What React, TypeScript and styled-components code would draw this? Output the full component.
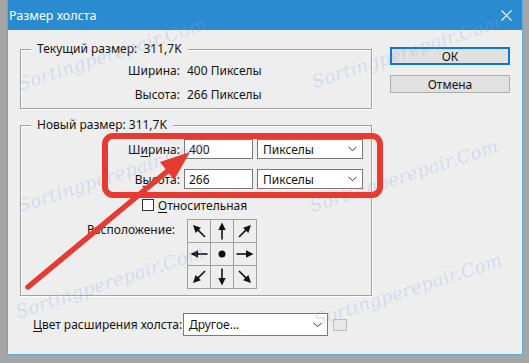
import React from 'react';
import styled, { createGlobalStyle } from 'styled-components';

const GlobalStyle = createGlobalStyle`
  html, body {
    margin: 0;
    padding: 0;
  }
  body {
    width: 529px;
    height: 363px;
    overflow: hidden;
    background: #a5a5a5;
    font-family: "Noto Sans", "Open Sans", sans-serif;
    font-size: 12px;
    color: #141414;
  }
`;

const Screen = styled.div`
  position: relative;
  width: 529px;
  height: 363px;
  box-sizing: border-box;
  padding-left: 7px;
  background: #a5a5a5;
`;

const Window = styled.div`
  width: 516px;
  height: 355px;
  box-sizing: border-box;
  border: 1px solid #5eaae0;
  border-top: none;
  background: #eeeeee;
  display: flex;
  flex-direction: column;
`;

const TitleBar = styled.div`
  height: 30px;
  flex: none;
  display: flex;
  align-items: center;
  justify-content: space-between;
  padding: 0 10px 0 1px;
  background: #2b8bd0;
  color: #fff;
  font-size: 12.5px;
`;

const Body = styled.div`
  display: flex;
  gap: 18px;
  padding: 10px 0 0 12px;
`;

const LeftCol = styled.div`
  width: 352px;
  display: flex;
  flex-direction: column;
`;

const RightCol = styled.div`
  width: 120px;
  display: flex;
  flex-direction: column;
  gap: 10px;
  padding-top: 7px;
`;

const Button = styled.div<{ $default?: boolean }>`
  height: 18px;
  box-sizing: border-box;
  display: flex;
  align-items: center;
  justify-content: center;
  background: #e1e1e1;
  border: ${({ $default }) => ($default ? '2px solid #0a78d7' : '1px solid #adadad')};
`;

const Group = styled.fieldset<{ $gap?: number }>`
  margin: ${({ $gap }) => $gap || 0}px 0 0 0;
  padding: 0;
  min-width: 0;
  border: 1px solid #a0a0a0;
  box-shadow: 1px 1px 0 #fff, inset 1px 1px 0 #fff;
`;

const Legend = styled.legend`
  margin-left: 10px;
  padding: 0 6px;
  line-height: 18px;
  background: #eeeeee;
`;

const InfoGrid = styled.div`
  display: grid;
  grid-template-columns: 159px auto;
  column-gap: 7px;
  grid-auto-rows: 24px;
  align-items: center;
  padding-bottom: 2px;
`;

const Label = styled.span`
  justify-self: end;
  white-space: nowrap;
`;

const SizeGrid = styled.div`
  display: grid;
  grid-template-columns: 159px 69px 106px;
  column-gap: 4px;
  row-gap: 10px;
  grid-auto-rows: 20px;
  align-items: center;
  padding-top: 5px;
`;

const TextField = styled.div`
  height: 20px;
  box-sizing: border-box;
  border: 1px solid #7a7a7a;
  background: #fff;
  display: flex;
  align-items: center;
  padding-left: 4px;
`;

const Select = styled.div<{ $w?: number; $h?: number }>`
  width: ${({ $w }) => ($w ? `${$w}px` : 'auto')};
  height: ${({ $h }) => $h || 20}px;
  box-sizing: border-box;
  border: 1px solid #7a7a7a;
  background: #fff;
  display: flex;
  align-items: center;
  justify-content: space-between;
  padding: 0 5px 0 5px;
`;

const CheckRow = styled.div`
  margin-top: 7px;
  height: 18px;
  display: flex;
  align-items: center;
  gap: 4px;
  padding-left: 121px;
`;

const Box = styled.span`
  width: 12px;
  height: 12px;
  box-sizing: border-box;
  border: 1px solid #333;
  background: #fff;
`;

const AnchorRow = styled.div`
  margin-top: 5px;
  display: flex;
  gap: 12px;
  padding-bottom: 6px;
`;

const AnchorLabel = styled.span`
  width: 154px;
  text-align: right;
  line-height: 16px;
  padding-top: 3px;
`;

const AnchorGrid = styled.div`
  display: grid;
  grid-template-columns: repeat(3, 22px);
  grid-auto-rows: 22px;
  gap: 1px;
  border: 1px solid #a0a0a0;
  background: #a0a0a0;
`;

const Cell = styled.div`
  background: #eeeeee;
  display: flex;
  align-items: center;
  justify-content: center;
`;

const BottomRow = styled.div`
  margin-top: 17px;
  display: flex;
  align-items: center;
  gap: 3px;
  padding-left: 13px;
  height: 23px;
`;

const BottomLabel = styled.span`
  width: 147px;
  white-space: nowrap;
`;

const Swatch = styled.span`
  margin-left: 2px;
  width: 14px;
  height: 12px;
  box-sizing: border-box;
  border: 1px solid #bdbdbd;
  background: #e8e8ea;
`;

const Key = styled.u`
  text-decoration-thickness: 1px;
  text-underline-offset: 2px;
`;

const Overlay = styled.svg`
  position: absolute;
  left: 0;
  top: 0;
  pointer-events: none;
`;

const Watermark = styled.span<{ $x: number; $y: number }>`
  position: absolute;
  left: ${({ $x }) => $x}px;
  top: ${({ $y }) => $y - 24}px;
  line-height: 24px;
  font-family: "DejaVu Serif", serif;
  font-style: italic;
  font-size: 18px;
  letter-spacing: 0.3px;
  color: rgba(145, 162, 220, 0.28);
  transform-origin: 0 100%;
  transform: rotate(-18deg);
  white-space: nowrap;
  pointer-events: none;
`;

const Chevron = () => (
  <svg width="9" height="6" viewBox="0 0 9 6">
    <path d="M0.5 0.8 L4.5 4.8 L8.5 0.8" fill="none" stroke="#333" strokeWidth="1" />
  </svg>
);

const CloseIcon = () => (
  <svg width="11" height="11" viewBox="0 0 11 11">
    <path d="M0.5 0.5 L10.5 10.5 M10.5 0.5 L0.5 10.5" stroke="#fff" strokeWidth="1.1" />
  </svg>
);

const ArrowGlyph = ({ angle }: { angle: number }) => (
  <svg width="22" height="22" viewBox="0 0 22 22">
    <g transform={`rotate(${angle} 11 11)`}>
      <line x1="11" y1="19.5" x2="11" y2="8" stroke="#111" strokeWidth="1.6" />
      <polygon points="11,2.5 7.3,10 14.7,10" fill="#111" />
    </g>
  </svg>
);

const anchors: (number | null)[] = [-45, 0, 45, -90, null, 90, -135, 180, 135];

const marks: [number, number][] = [
  [22, 96],
  [316, 94],
  [22, 218],
  [314, 218],
  [20, 324],
  [318, 332],
];

export default function App() {
  return (
    <Screen>
      <GlobalStyle />
      <Window>
        <TitleBar>
          <span>Размер холста</span>
          <CloseIcon />
        </TitleBar>
        <Body>
          <LeftCol>
            <Group>
              <Legend>Текущий размер:&nbsp; 311,7K</Legend>
              <InfoGrid>
                <Label>Ширина:</Label>
                <span>400 Пикселы</span>
                <Label>Высота:</Label>
                <span>266 Пикселы</span>
              </InfoGrid>
            </Group>

            <Group $gap={7}>
              <Legend>Новый размер: 311,7K</Legend>
              <SizeGrid>
                <Label>
                  Ш<Key>и</Key>рина:
                </Label>
                <TextField>400</TextField>
                <Select>
                  Пикселы
                  <Chevron />
                </Select>
                <Label>
                  В<Key>ы</Key>сота:
                </Label>
                <TextField>266</TextField>
                <Select>
                  Пикселы
                  <Chevron />
                </Select>
              </SizeGrid>
              <CheckRow>
                <Box />
                <span>
                  <Key>О</Key>тносительная
                </span>
              </CheckRow>
              <AnchorRow>
                <AnchorLabel>Расположение:</AnchorLabel>
                <AnchorGrid>
                  {anchors.map((a, i) => (
                    <Cell key={i}>
                      {a === null ? (
                        <svg width="8" height="8" viewBox="0 0 8 8">
                          <circle cx="4" cy="4" r="3.5" fill="#111" />
                        </svg>
                      ) : (
                        <ArrowGlyph angle={a} />
                      )}
                    </Cell>
                  ))}
                </AnchorGrid>
              </AnchorRow>
            </Group>

            <BottomRow>
              <BottomLabel>
                <Key>Ц</Key>вет расширения холста:
              </BottomLabel>
              <Select $w={145} $h={23}>
                Другое...
                <Chevron />
              </Select>
              <Swatch />
            </BottomRow>
          </LeftCol>

          <RightCol>
            <Button $default>ОК</Button>
            <Button>Отмена</Button>
          </RightCol>
        </Body>
      </Window>

      {marks.map(([x, y], i) => (
        <Watermark key={i} $x={x} $y={y}>
          Sortingperepair.Com
        </Watermark>
      ))}

      <Overlay width="529" height="363" viewBox="0 0 529 363">
        <rect x="105" y="136" width="275" height="59" rx="8" fill="none" stroke="#e53b30" strokeWidth="6" />
        <line x1="28" y1="287" x2="170" y2="169" stroke="#e53b30" strokeWidth="5.5" strokeLinecap="round" />
        <polygon points="190,152 174,180 160,162" fill="#e53b30" />
      </Overlay>
    </Screen>
  );
}
